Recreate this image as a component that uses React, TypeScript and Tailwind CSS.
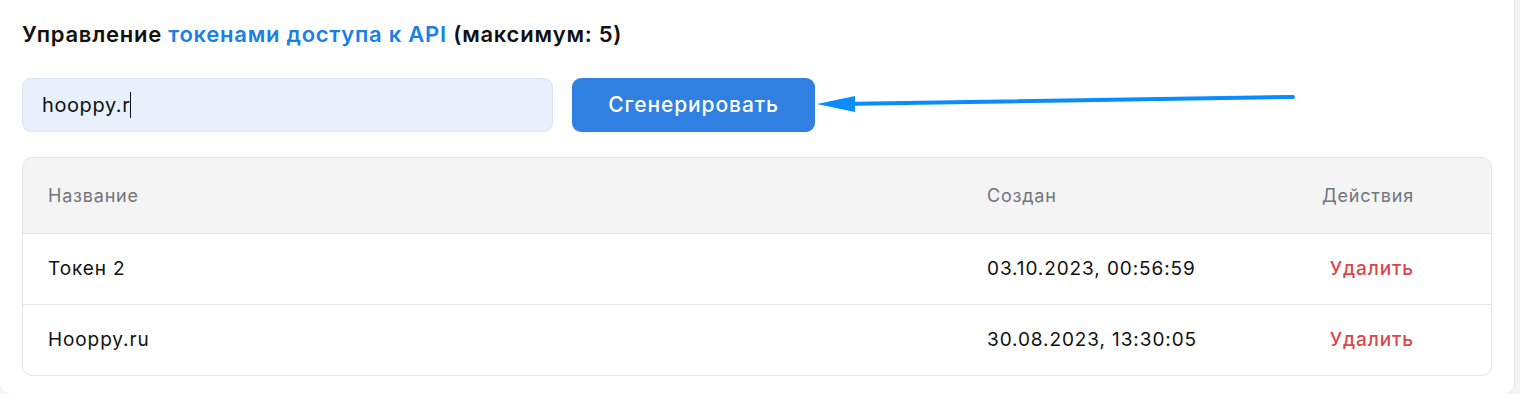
import React from 'react';

const tokens = [
  { name: 'Токен 2', created: '03.10.2023, 00:56:59' },
  { name: 'Hooppy.ru', created: '30.08.2023, 13:30:05' },
];

export default function App() {
  return (
    <div className="h-[394px] w-[1520px] overflow-hidden bg-[#f3f3f5] font-['Inter',sans-serif] text-[#111]">
      <div className="relative h-[404px] w-[1515px] -mt-[10px] rounded-[12px] border-r border-[#e6e6e8] bg-white px-[22px] pt-[29px]">
        <h2 className="text-[22px] font-semibold leading-[30px] tracking-[0.75px]">
          Управление <span className="text-[#1a7fe6]">токенами доступа к API</span> (максимум: 5)
        </h2>

        <div className="mt-[29px] flex items-center gap-[19px]">
          <div className="flex h-[54px] w-[531px] items-center rounded-[9px] border border-[#dde3ea] bg-[#e8f0fb] px-[19px] text-[20px] tracking-[0.6px]">
            hooppy.r<span className="inline-block h-[26px] w-px bg-[#111]" />
          </div>
          <button className="h-[54px] w-[243px] rounded-[9px] bg-[#2f80e0] text-[21px] font-medium tracking-[0.9px] text-white">
            Сгенерировать
          </button>
        </div>

        {/* стрелка-указатель */}
        <svg
          className="absolute left-[810px] top-[101px]"
          width="500"
          height="30"
          viewBox="0 0 500 30"
        >
          <line x1="30" y1="13" x2="483" y2="6" stroke="#0a8cff" strokeWidth="4" strokeLinecap="round" />
          <polygon points="7,13 45,5 45,21" fill="#0a8cff" />
        </svg>

        <div className="mt-[25px] w-[1470px] overflow-hidden rounded-[10px] border border-[#e4e4e7] tracking-[0.9px]">
          <div className="flex h-[75px] items-center bg-[#f4f4f5] text-[18px] tracking-[0.8px] text-[#70757a]">
            <div className="flex-1 pl-[25px]">Название</div>
            <div className="w-[334px]">Создан</div>
            <div className="w-[170px] pr-[77px] text-right">Действия</div>
          </div>
          {tokens.map((t) => (
            <div
              key={t.name}
              className="flex h-[71px] items-center border-t border-[#e4e4e7] text-[19px]"
            >
              <div className="flex-1 pl-[25px]">{t.name}</div>
              <div className="w-[334px]">{t.created}</div>
              <div className="w-[170px] pr-[77px] text-right font-medium text-[#d9474b]">Удалить</div>
            </div>
          ))}
        </div>
      </div>
    </div>
  );
}
